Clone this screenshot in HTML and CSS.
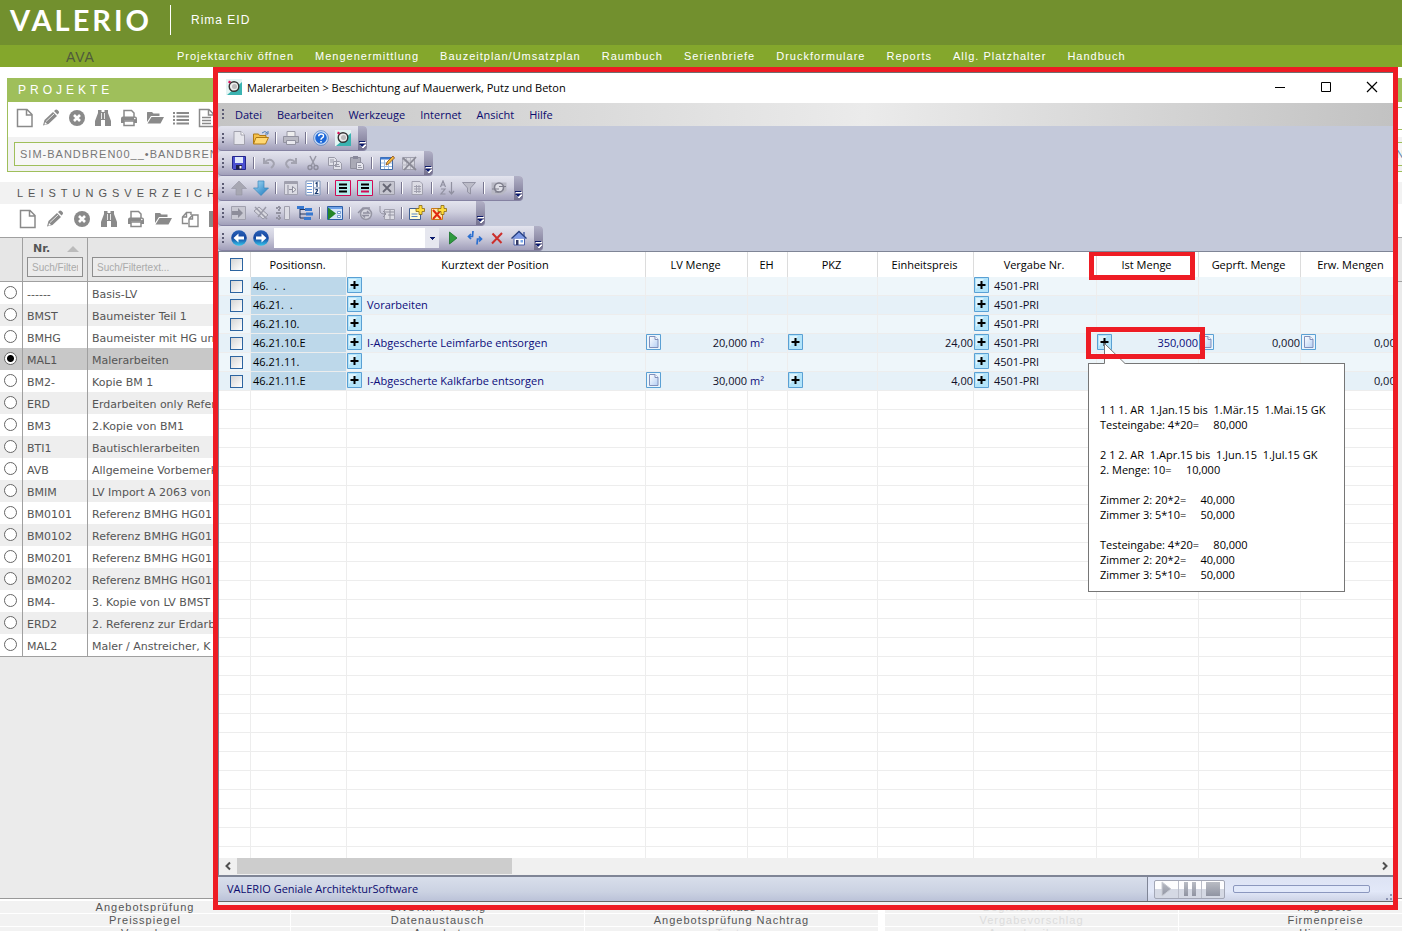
FILE: index.html
```html
<!DOCTYPE html>
<html lang="de">
  <head>
    <meta charset="utf-8">
    <title>VALERIO - AVA</title>
    <link rel="stylesheet" href="styles.css">
  </head>
  <body>
    <!-- icon sprite -->
    <svg class="sprite" width="0" height="0">
      <defs>
        <linearGradient id="gBlue" x1="0" y1="0" x2="0" y2="1"><stop offset="0" stop-color="#2a62b8"/><stop offset=".5" stop-color="#1546a0"/><stop offset="1" stop-color="#35c8ee"/></linearGradient>
        <linearGradient id="gDown" x1="0" y1="0" x2="1" y2="1"><stop offset="0" stop-color="#a8dcf6"/><stop offset="1" stop-color="#1877bd"/></linearGradient>
        <linearGradient id="gPage" x1="0" y1="0" x2="1" y2="1"><stop offset="0" stop-color="#ffffff"/><stop offset="1" stop-color="#b4cff4"/></linearGradient>
        <linearGradient id="gStop" x1="0" y1="0" x2="0" y2="1"><stop offset="0" stop-color="#b9bcc4"/><stop offset="1" stop-color="#9094a2"/></linearGradient>
      </defs>
      <!-- grey page icons -->
      <symbol id="w-page" viewBox="0 0 18 20"><path d="M1.500 1.500h9.500l5 5v12h-14.500zM10.500 1.500v5.500h5.500" fill="none" stroke="#8a8a8a" stroke-width="1.500"/></symbol>
      <symbol id="w-pen" viewBox="0 0 18 20"><path d="M1 17.500l1.500-5.500L11 4l4 4-8.500 8zM12 3l1.500-1.300q1-.6 2 .3l1.200 1.300q.8 1 0 1.900L15.500 6.500z" fill="#8a8a8a"/><path d="M4 13.500l8-7.500" stroke="#fff" stroke-width=".8"/><path d="M3 14l2 2-2.500.7z" fill="#fff"/></symbol>
      <symbol id="w-del" viewBox="0 0 18 20"><circle cx="9" cy="10" r="8" fill="#8a8a8a"/><path d="M6 7l6 6M12 7l-6 6" stroke="#fff" stroke-width="2.600"/></symbol>
      <symbol id="w-find" viewBox="0 0 18 20"><path d="M4 2h3.500v2h3V2H14v3l3 8v5h-6v-6H7v6H1v-5l3-8z" fill="#8a8a8a"/><path d="M7.500 5v6M10.500 5v6" stroke="#fff" stroke-width=".8"/></symbol>
      <symbol id="w-print" viewBox="0 0 18 20"><path d="M4 9V2.500h7.500L14 5v4M4 13h10v4.500H4z" fill="none" stroke="#8a8a8a" stroke-width="1.500"/><path d="M1 15v-4.500Q1 8.500 3 8.500h12q2 0 2 2V15h-3v-2.500H4V15z" fill="#8a8a8a"/><circle cx="14.800" cy="10.500" r=".8" fill="#fff"/></symbol>
      <symbol id="w-open" viewBox="0 0 18 20"><path d="M1 14V4.500Q1 4 1.500 4h4.500l1.500 1.500h6V8H5z" fill="#8a8a8a"/><path d="M5.500 9H18l-3.500 6.500H1.500z" fill="#8a8a8a"/></symbol>
      <symbol id="w-list" viewBox="0 0 18 20"><path d="M1 5h2M1 8.500h2M1 12h2M1 15.500h2M4.500 5H17M4.500 8.500H17M4.500 12H17M4.500 15.500H17" stroke="#8a8a8a" stroke-width="2.200"/></symbol>
      <symbol id="w-doc" viewBox="0 0 18 20"><path d="M1.500 1.500h9.500l5 5v12h-14.500zM10.500 1.500v5.500h5.500" fill="none" stroke="#8a8a8a" stroke-width="1.500"/><path d="M4 9.500h9M4 12.500h9M4 15.500h9" stroke="#8a8a8a" stroke-width="1.500"/></symbol>
      <symbol id="w-copy" viewBox="0 0 18 20"><path d="M7 14.500H1.500V8L5.500 3.500H10V6M5.500 3.500V8H1.500M8 17.500V10l3.500-4H17v11.500zM11.500 6v4H8" fill="none" stroke="#8a8a8a" stroke-width="1.400"/></symbol>
      <symbol id="w-save" viewBox="0 0 18 20"><path d="M1 2h16v16H1z" fill="#8a8a8a"/></symbol>

      <!-- application toolbar icons -->
      <symbol id="t-logo" viewBox="0 0 16 16"><path d="M0 0h16v16H0z" fill="#e4f4f3"/><path d="M16 3v13H1z" fill="#3bb3b1"/><circle cx="8" cy="7.500" r="4.800" fill="#eee" stroke="#333" stroke-width="1.400"/><circle cx="8.500" cy="7.500" r="2.500" fill="#bbb"/><path d="M2.500 2.500l2 1" stroke="#e0105a" stroke-width="2"/></symbol>
      <symbol id="t-new" viewBox="0 0 16 16"><path d="M3 1.500h7l3.500 3.500v9.500H3z" fill="#e6e6ec" stroke="#a2a2ae"/><path d="M10 1.500V5h3.500" fill="#fff" stroke="#a2a2ae"/></symbol>
      <symbol id="t-open" viewBox="0 0 16 16"><path d="M.5 14V4h5l1 1.500h6.500V8" fill="#f5c04a" stroke="#b07a14"/><path d="M3 7.500h12.500L12.500 14H.5z" fill="#ffd872" stroke="#b07a14"/><path d="M9 3q3-3 5.500 0M15 1v3h-3" fill="none" stroke="#4e7fb5"/></symbol>
      <symbol id="t-print" viewBox="0 0 16 16"><path d="M4 7V1.500h8V7" fill="#eee" stroke="#9a9aa6"/><path d="M.5 6.500h15v6H.5z" fill="#b9b9c3" stroke="#9292a0"/><path d="M3.500 10.500h9v4h-9z" fill="#e8e8ee" stroke="#9292a0"/></symbol>
      <symbol id="t-help" viewBox="0 0 16 16"><circle cx="8" cy="8" r="6.500" fill="#1e68d8" stroke="#c9dcf6" stroke-width="1.500"/><circle cx="8" cy="8" r="7.400" fill="none" stroke="#3b6fb9" stroke-width=".6"/><path d="M5.700 6.300q0-2.400 2.400-2.400t2.400 2q0 1.100-1.300 1.900T8 9.700M8 11v1.600" fill="none" stroke="#fff" stroke-width="1.500"/></symbol>
      <symbol id="t-save" viewBox="0 0 16 16"><path d="M1.500 1.500h13v13h-12l-1-1z" fill="#4a4fd0" stroke="#23268c"/><path d="M4 2h8v6H4z" fill="#dfe8fb"/><path d="M5 10h6v4.500H5z" fill="#20224c"/><path d="M8.500 11h2v2.500h-2z" fill="#fff"/></symbol>
      <symbol id="t-undo" viewBox="0 0 16 16"><path d="M3 3v5h5M3.500 7.500Q8 3 11.500 6t-1.500 7" fill="none" stroke="#a3a3b0" stroke-width="2"/></symbol>
      <symbol id="t-redo" viewBox="0 0 16 16"><path d="M13 3v5H8M12.500 7.500Q8 3 4.500 6T6 13" fill="none" stroke="#a3a3b0" stroke-width="2"/></symbol>
      <symbol id="t-cut" viewBox="0 0 16 16"><path d="M5 1l5 10M11 1L6 11" stroke="#9898a6" stroke-width="1.500"/><circle cx="5" cy="12.500" r="2" fill="none" stroke="#8d8d9c" stroke-width="1.400"/><circle cx="11" cy="12.500" r="2" fill="none" stroke="#8d8d9c" stroke-width="1.400"/></symbol>
      <symbol id="t-copy" viewBox="0 0 16 16"><path d="M1.500 2.500h6l2 2v6h-8zM6.500 6.500h6l2 2v6h-8z" fill="#e2e2ea" stroke="#9a9aa8"/><path d="M3 5h4M3 7h3M8 9.500h4M8 11.500h5" stroke="#9a9aa8"/></symbol>
      <symbol id="t-paste" viewBox="0 0 16 16"><path d="M1.500 2.500h10v11h-10z" fill="#aaaab6" stroke="#8e8e9c"/><path d="M4 1h5v3H4z" fill="#88889a"/><path d="M7.500 7.500h5l2 2v5h-7z" fill="#e6e6ee" stroke="#9090a0"/><path d="M9 10.500h3M9 12.500h4" stroke="#9a9aa8"/></symbol>
      <symbol id="t-edit" viewBox="0 0 16 16"><path d="M1.500 2.500h12v12h-12z" fill="#fff" stroke="#3f6aa8"/><path d="M1.500 3.500h12" stroke="#3f7ad0" stroke-width="2"/><path d="M2 8h11M2 11.500h11M5.500 5v9M9.500 5v9" stroke="#9cbbe2"/><path d="M7 10l1-3 6-6 1.500 2L9.500 9z" fill="#f0b840" stroke="#8c4a16" stroke-width=".8"/></symbol>
      <symbol id="t-editx" viewBox="0 0 16 16"><path d="M1.500 2.500h12v12h-12z" fill="#d8d8e0" stroke="#a0a0ae"/><path d="M1 6h12M1 10h12M5.500 3v11M9.500 3v11" stroke="#b8b8c4"/><path d="M2 3l13 12M15 2L3 15" stroke="#8a8a96" stroke-width="1.800"/></symbol>
      <symbol id="t-up" viewBox="0 0 16 16"><path d="M8 1l7.500 7.500H11V15H5V8.500H.5z" fill="#a7a7b2" stroke="#9494a2" stroke-width=".6"/></symbol>
      <symbol id="t-down" viewBox="0 0 16 16"><path d="M8 15.500L.5 8H5V1h6v7h4.500z" fill="url(#gDown)" stroke="#3a86bb" stroke-width=".7"/></symbol>
      <symbol id="t-insert" viewBox="0 0 16 16"><path d="M1.500 1.500h13v13h-13z" fill="#dcdce4" stroke="#a0a0ae"/><path d="M1.500 3h13" stroke="#a0a0ae" stroke-width="2"/><path d="M5 5v9M6 9.500h4M9.500 6.500l3.500 3-3.500 3z" fill="#eee" stroke="#8d8d9c"/></symbol>
      <symbol id="t-num" viewBox="0 0 16 16"><path d="M1 1h14v14H1z" fill="#fff" stroke="#7d93b8"/><path d="M2 3.500h5M2 6.500h5M2 9.500h5M2 12.500h5" stroke="#6f9bd8"/><path d="M8.500 1v14" stroke="#7d93b8"/><path d="M10.500 3.500l1.500-1V7M10.500 10q2-1.500 2 .5l-2 3h3" fill="none" stroke="#16386e" stroke-width="1.200"/><path d="M9 8h6" stroke="#7d93b8"/></symbol>
      <symbol id="t-rows1" viewBox="0 0 16 16"><path d="M.5 .5h15v15H.5z" fill="#b6ecec" stroke="#d20a55"/><path d="M4 4.500h8M4 11.500h8" stroke="#000" stroke-width="2"/><path d="M4 8h8" stroke="#000" stroke-width="2"/></symbol>
      <symbol id="t-rows2" viewBox="0 0 16 16"><path d="M.5 .5h15v15H.5z" fill="#b6ecec" stroke="#d20a55"/><path d="M4 4.500h8M4 8h8" stroke="#000" stroke-width="2"/><path d="M4 11.500h8" stroke="#d20a55" stroke-width="2"/></symbol>
      <symbol id="t-rowsx" viewBox="0 0 16 16"><path d="M.5 1.500h15v13H.5z" fill="#c6c6d0" stroke="#9a9aa8"/><path d="M4 4l8 8M12 4l-8 8" stroke="#666674" stroke-width="1.800"/></symbol>
      <symbol id="t-form" viewBox="0 0 16 16"><path d="M3 1.500h8l2.500 2.500v10.500H3z" fill="#dcdce4" stroke="#a0a0ae"/><path d="M5 6.500h7M5 9h7M5 11.500h7M7.500 5v8M10 5v8" stroke="#a0a0ae"/></symbol>
      <symbol id="t-sort" viewBox="0 0 16 16"><path d="M1.500 7L4 1l2.500 6M2.500 5h3M2 9h4l-4 5h4.500M12.500 2v11M10 11l2.500 3 2.500-3" fill="none" stroke="#9090a0" stroke-width="1.200"/></symbol>
      <symbol id="t-filter" viewBox="0 0 16 16"><path d="M1.500 2.500h13L9.500 8v6l-3-2V8z" fill="#bcbcc8" stroke="#9494a4"/></symbol>
      <symbol id="t-refresh" viewBox="0 0 16 16"><path d="M.5 2.500h15v8l-4 4h-11z" fill="#b8b8c4"/><circle cx="8" cy="7.500" r="4.500" fill="#dedee6" stroke="#7e7e8c" stroke-width="1.600"/><path d="M1 9h7M8 6.500h7M4 12h4" stroke="#7e7e8c"/></symbol>
      <symbol id="t-goto" viewBox="0 0 16 16"><path d="M.5 1.500h14v13H.5z" fill="#c8c8d2" stroke="#a0a0ae"/><path d="M1 6h6V3l5 5-5 5v-3H1z" fill="#8d8d9a"/></symbol>
      <symbol id="t-erase" viewBox="0 0 16 16"><path d="M1 6l5-4 9 8-5 4z" fill="#d8d8e0" stroke="#9898a6"/><path d="M2 2l12 12M13 2L5 12" stroke="#9a9aa8" stroke-width="1.500"/></symbol>
      <symbol id="t-cols" viewBox="0 0 16 16"><path d="M9.500 1.500h5v13h-5z" fill="#dcdce4" stroke="#a0a0ae"/><path d="M1 3h6M1 8h6M1 13h6M4 1v14" stroke="#9494a2" stroke-width="2" stroke-dasharray="2 1"/></symbol>
      <symbol id="t-tree" viewBox="0 0 16 16"><path d="M3 2v11h6M3 4.500h6M3 9h6" fill="none" stroke="#25365e"/><path d="M0 1h7v3H0zM8 3h7v3H8zM9 7.500h7v3H9zM7 12h7v3H7z" fill="#3778cf"/></symbol>
      <symbol id="t-run" viewBox="0 0 16 16"><path d="M.5 1.500h15v13H.5z" fill="#d5e5fb" stroke="#2d5ea8"/><path d="M1 3h14" stroke="#6fa2e8" stroke-width="2"/><path d="M1 2.500l8 6-8 6.500z" fill="#25862a"/><path d="M10.500 6.500h3v2h-3zM10.500 10.500h3v2h-3z" fill="#fff" stroke="#5b86c4" stroke-width=".8"/></symbol>
      <symbol id="t-cycle" viewBox="0 0 16 16"><circle cx="9" cy="9" r="5.500" fill="#d5d5de" stroke="#9696a4" stroke-width="1.500"/><path d="M1 8l5-5h7M6 8h6l-2-2M12 10.500H6l2 2" fill="none" stroke="#9090a0" stroke-width="1.400"/></symbol>
      <symbol id="t-into" viewBox="0 0 16 16"><path d="M5.500 4.500h10v10h-10z" fill="#dcdce4" stroke="#a0a0ae"/><path d="M1 1v5q0 3 5 3M4 6l3 3-3 3M6 7h9M9 10h6M11 5v9" fill="none" stroke="#9494a2"/></symbol>
      <symbol id="t-noteadd" viewBox="0 0 16 16"><path d="M.5 3.500h11v11H.5z" fill="#fffbd8" stroke="#3f5f94"/><path d="M2.500 9h6M2.500 11.500h6" stroke="#5887c7"/><path d="M10 .5h3v3h2.500v3H13v3h-3v-3H7v-3h3z" fill="#ffdc3c" stroke="#8a6a10" stroke-width=".8"/></symbol>
      <symbol id="t-notedel" viewBox="0 0 16 16"><path d="M.5 3.500h11v11H.5z" fill="#ffe8b0" stroke="#c87a18"/><path d="M2 5l8 9M10 5l-8 9" stroke="#e22a10" stroke-width="2"/><path d="M10 .5h3v3h2.500v3H13v3h-3v-3H7v-3h3z" fill="#ffdc3c" stroke="#8a6a10" stroke-width=".8"/></symbol>
      <symbol id="t-back" viewBox="0 0 16 16"><circle cx="8" cy="8" r="7.800" fill="url(#gBlue)"/><path d="M2.500 8l5-4.500V6.500H13v3H7.500v3z" fill="#fff"/></symbol>
      <symbol id="t-fwd" viewBox="0 0 16 16"><circle cx="8" cy="8" r="7.800" fill="url(#gBlue)"/><path d="M13.500 8l-5-4.500V6.500H3v3h5.500v3z" fill="#fff"/></symbol>
      <symbol id="t-play" viewBox="0 0 16 16"><path d="M4.500 2l7.500 6-7.500 6z" fill="#2f9a3e" stroke="#17702a" stroke-width=".8"/></symbol>
      <symbol id="t-swap" viewBox="0 0 16 16"><path d="M6 1L5.500 6.500H1.500M4 4L1.500 6.500 4 9M10 14.500L10.500 9h4M12 6.500L14.500 9 12 11.500" fill="none" stroke="#2a6fd0" stroke-width="1.700"/></symbol>
      <symbol id="t-stop" viewBox="0 0 16 16"><path d="M3.500 3.500l9 9.500M13 3L3 13.500" stroke="#cc2f2c" stroke-width="2"/></symbol>
      <symbol id="t-home" viewBox="0 0 16 16"><path d="M3 8h10.500v7H3z" fill="#fff" stroke="#4a5ea8"/><path d="M12 2h2v4h-2z" fill="#7080b8"/><path d="M.5 8.500L8 1.500l7.500 7" fill="#7e9ae6" stroke="#28407f" stroke-width="1.300"/><path d="M5 10h2.500v5H5z" fill="#333a66"/><path d="M9.500 10h2.500v2.500H9.500z" fill="#79a7e8"/></symbol>
      <symbol id="t-more" viewBox="0 0 9 24"><path d="M2 16.500h6M2 19h6l-3 3z" fill="#fff" stroke="#fff"/><path d="M1 15.500h6" stroke="#0b1a6c"/><path d="M1 18h6l-3 3z" fill="#0b1a6c"/></symbol>
      <!-- cell icons -->
      <symbol id="c-plus" viewBox="0 0 15 16"><path d="M.5 .5h14v15H.5z" fill="#b3e4fa" stroke="#5aa0d4"/><path d="M2 2h8l-8 10z" fill="#dff4fd"/><path d="M7.500 4v8M3.500 8h8" stroke="#000" stroke-width="2"/></symbol>
      <symbol id="c-page" viewBox="0 0 15 16"><path d="M.5 .5h14v15H.5z" fill="#eaf5fd" stroke="#5aa0d4"/><path d="M3.500 2.500h5.500l3 3v8h-8.500z" fill="url(#gPage)" stroke="#8190bb"/><path d="M9 2.500v3h3" fill="#fff" stroke="#8190bb"/></symbol>
    </svg>

    <header class="topbar">
      <div class="logo">VALERIO</div>
      <div class="user">Rima EID</div>
    </header>
    <nav class="mainnav">
      <div class="module">AVA</div>
      <a href="#">Projektarchiv öffnen</a>
      <a href="#">Mengenermittlung</a>
      <a href="#">Bauzeitplan/Umsatzplan</a>
      <a href="#">Raumbuch</a>
      <a href="#">Serienbriefe</a>
      <a href="#">Druckformulare</a>
      <a href="#">Reports</a>
      <a href="#">Allg. Platzhalter</a>
      <a href="#">Handbuch</a>
    </nav>

    <main class="content">
      <section class="panel">
        <h2 class="panel-title">PROJEKTE</h2>
        <div class="icon-row">
          <button type="button" aria-label="Neu"><svg><use href="#w-page"/></svg></button>
          <button type="button" aria-label="Bearbeiten"><svg><use href="#w-pen"/></svg></button>
          <button type="button" aria-label="Löschen"><svg><use href="#w-del"/></svg></button>
          <button type="button" aria-label="Suchen"><svg><use href="#w-find"/></svg></button>
          <button type="button" aria-label="Drucken"><svg><use href="#w-print"/></svg></button>
          <button type="button" aria-label="Öffnen"><svg><use href="#w-open"/></svg></button>
          <button type="button" aria-label="Liste"><svg><use href="#w-list"/></svg></button>
          <button type="button" aria-label="Dokument"><svg><use href="#w-doc"/></svg></button>
          <span class="row-field"></span>
        </div>
        <div class="project-row">
          <input type="text" class="project-input" aria-label="Projekt" value="SIM-BANDBREN00__•BANDBREN00">
          <input type="text" class="project-input project-next" aria-label="Nummer" value="N">
        </div>
      </section>

      <h2 class="list-title">LEISTUNGSVERZEICHNIS</h2>
      <div class="icon-row icon-row-wide">
        <button type="button" aria-label="Neu"><svg><use href="#w-page"/></svg></button>
        <button type="button" aria-label="Bearbeiten"><svg><use href="#w-pen"/></svg></button>
        <button type="button" aria-label="Löschen"><svg><use href="#w-del"/></svg></button>
        <button type="button" aria-label="Suchen"><svg><use href="#w-find"/></svg></button>
        <button type="button" aria-label="Drucken"><svg><use href="#w-print"/></svg></button>
        <button type="button" aria-label="Öffnen"><svg><use href="#w-open"/></svg></button>
        <button type="button" aria-label="Kopieren"><svg><use href="#w-copy"/></svg></button>
        <button type="button" aria-label="Speichern"><svg><use href="#w-save"/></svg></button>
      </div>
      <table class="lv-list">
        <thead>
          <tr>
            <th class="c-radio"></th>
            <th class="c-nr"><span class="nr-label">Nr.<i class="sort-up"></i></span><input type="text" aria-label="Nr. filtern" placeholder="Such/Filtertext..."></th>
            <th class="c-name"><input type="text" aria-label="Name filtern" placeholder="Such/Filtertext..."></th>
            <th class="c-rest"></th>
          </tr>
        </thead>
        <tbody>
          <tr><td><input type="radio" name="lv" aria-label="Basis-LV"></td><td>------</td><td>Basis-LV</td></tr>
          <tr><td><input type="radio" name="lv" aria-label="BMST"></td><td>BMST</td><td>Baumeister Teil 1</td></tr>
          <tr><td><input type="radio" name="lv" aria-label="BMHG"></td><td>BMHG</td><td>Baumeister mit HG und</td></tr>
          <tr class="selected"><td><input type="radio" name="lv" aria-label="MAL1" checked></td><td>MAL1</td><td>Malerarbeiten</td></tr>
          <tr><td><input type="radio" name="lv" aria-label="BM2-"></td><td>BM2-</td><td>Kopie BM 1</td></tr>
          <tr><td><input type="radio" name="lv" aria-label="ERD"></td><td>ERD</td><td>Erdarbeiten only Referenz</td></tr>
          <tr><td><input type="radio" name="lv" aria-label="BM3"></td><td>BM3</td><td>2.Kopie von BM1</td></tr>
          <tr><td><input type="radio" name="lv" aria-label="BTI1"></td><td>BTI1</td><td>Bautischlerarbeiten</td></tr>
          <tr><td><input type="radio" name="lv" aria-label="AVB"></td><td>AVB</td><td>Allgemeine Vorbemerkungen</td></tr>
          <tr><td><input type="radio" name="lv" aria-label="BMIM"></td><td>BMIM</td><td>LV Import A 2063 von</td></tr>
          <tr><td><input type="radio" name="lv" aria-label="BM0101"></td><td>BM0101</td><td>Referenz BMHG HG01</td></tr>
          <tr><td><input type="radio" name="lv" aria-label="BM0102"></td><td>BM0102</td><td>Referenz BMHG HG01</td></tr>
          <tr><td><input type="radio" name="lv" aria-label="BM0201"></td><td>BM0201</td><td>Referenz BMHG HG01</td></tr>
          <tr><td><input type="radio" name="lv" aria-label="BM0202"></td><td>BM0202</td><td>Referenz BMHG HG01</td></tr>
          <tr><td><input type="radio" name="lv" aria-label="BM4-"></td><td>BM4-</td><td>3. Kopie von LV BMST</td></tr>
          <tr><td><input type="radio" name="lv" aria-label="ERD2"></td><td>ERD2</td><td>2. Referenz zur Erdarbeit</td></tr>
          <tr><td><input type="radio" name="lv" aria-label="MAL2"></td><td>MAL2</td><td>Maler / Anstreicher, K</td></tr>
        </tbody>
      </table>
    </main>

    <footer class="links">
      <div class="link-col"><a href="#">Angebotsprüfung</a><a href="#">Preisspiegel</a><a href="#">Vergabe</a></div>
      <div class="link-col"><a href="#">ÖNORM-Prüfung</a><a href="#">Datenaustausch</a><a href="#">Angebot</a></div>
      <div class="link-col"><a href="#">Aufmass</a><a href="#">Angebotsprüfung Nachtrag</a><a href="#" class="faint">Texte</a></div>
      <div class="link-col faint split"><a href="#">Begleitschreiben</a><a href="#">Vergabevorschlag</a><a href="#">Ausschreibung</a></div>
      <div class="link-col"><a href="#">Angebote</a><a href="#">Firmenpreise</a><a href="#">Hinweise</a></div>
    </footer>

    <!-- Malerarbeiten window -->
    <div class="window">
      <div class="titlebar">
        <svg class="app-icon"><use href="#t-logo"/></svg>
        <span>Malerarbeiten &gt; Beschichtung auf Mauerwerk, Putz und Beton</span>
        <div class="win-buttons">
          <button type="button" aria-label="Minimieren"><svg viewBox="0 0 12 12"><path d="M1 6.500h10" stroke="#000"/></svg></button>
          <button type="button" aria-label="Maximieren"><svg viewBox="0 0 12 12"><path d="M1.500 1.500h9v9h-9z" fill="none" stroke="#000"/></svg></button>
          <button type="button" aria-label="Schließen"><svg viewBox="0 0 12 12"><path d="M1 1l10 10M11 1L1 11" stroke="#000" stroke-width="1.200"/></svg></button>
        </div>
      </div>
      <div class="menubar">
        <i class="grip"></i>
        <button type="button">Datei</button>
        <button type="button">Bearbeiten</button>
        <button type="button">Werkzeuge</button>
        <button type="button">Internet</button>
        <button type="button">Ansicht</button>
        <button type="button">Hilfe</button>
      </div>
      <div class="toolbars">
        <div class="toolbar">
          <i class="grip"></i>
          <button type="button" aria-label="Neu"><svg><use href="#t-new"/></svg></button>
          <button type="button" aria-label="Öffnen"><svg><use href="#t-open"/></svg></button>
          <i class="sep"></i>
          <button type="button" aria-label="Drucken"><svg><use href="#t-print"/></svg></button>
          <i class="sep"></i>
          <button type="button" aria-label="Hilfe"><svg><use href="#t-help"/></svg></button>
          <button type="button" aria-label="Info"><svg><use href="#t-logo"/></svg></button>
          <svg class="more"><use href="#t-more"/></svg>
        </div>
        <div class="toolbar">
          <i class="grip"></i>
          <button type="button" aria-label="Speichern"><svg><use href="#t-save"/></svg></button>
          <i class="sep"></i>
          <button type="button" aria-label="Rückgängig"><svg><use href="#t-undo"/></svg></button>
          <button type="button" aria-label="Wiederholen"><svg><use href="#t-redo"/></svg></button>
          <button type="button" aria-label="Ausschneiden"><svg><use href="#t-cut"/></svg></button>
          <button type="button" aria-label="Kopieren"><svg><use href="#t-copy"/></svg></button>
          <button type="button" aria-label="Einfügen"><svg><use href="#t-paste"/></svg></button>
          <i class="sep"></i>
          <button type="button" aria-label="Bearbeiten"><svg><use href="#t-edit"/></svg></button>
          <button type="button" aria-label="Abbrechen"><svg><use href="#t-editx"/></svg></button>
          <svg class="more"><use href="#t-more"/></svg>
        </div>
        <div class="toolbar">
          <i class="grip"></i>
          <button type="button" aria-label="Nach oben"><svg><use href="#t-up"/></svg></button>
          <button type="button" aria-label="Nach unten"><svg><use href="#t-down"/></svg></button>
          <i class="sep"></i>
          <button type="button" aria-label="Einrücken"><svg><use href="#t-insert"/></svg></button>
          <button type="button" aria-label="Nummerieren"><svg><use href="#t-num"/></svg></button>
          <i class="sep"></i>
          <button type="button" aria-label="Zeile einfügen"><svg><use href="#t-rows1"/></svg></button>
          <button type="button" aria-label="Zeile anhängen"><svg><use href="#t-rows2"/></svg></button>
          <button type="button" aria-label="Zeile löschen"><svg><use href="#t-rowsx"/></svg></button>
          <i class="sep"></i>
          <button type="button" aria-label="Formular"><svg><use href="#t-form"/></svg></button>
          <i class="sep"></i>
          <button type="button" aria-label="Sortieren"><svg><use href="#t-sort"/></svg></button>
          <button type="button" aria-label="Filtern"><svg><use href="#t-filter"/></svg></button>
          <i class="sep"></i>
          <button type="button" aria-label="Aktualisieren"><svg><use href="#t-refresh"/></svg></button>
          <svg class="more"><use href="#t-more"/></svg>
        </div>
        <div class="toolbar toolbar-long">
          <i class="grip"></i>
          <button type="button" aria-label="Gehe zu"><svg><use href="#t-goto"/></svg></button>
          <button type="button" aria-label="Leeren"><svg><use href="#t-erase"/></svg></button>
          <button type="button" aria-label="Spalten"><svg><use href="#t-cols"/></svg></button>
          <button type="button" aria-label="Struktur"><svg><use href="#t-tree"/></svg></button>
          <i class="sep"></i>
          <button type="button" aria-label="Ausführen"><svg><use href="#t-run"/></svg></button>
          <i class="sep"></i>
          <button type="button" aria-label="Abgleichen"><svg><use href="#t-cycle"/></svg></button>
          <button type="button" aria-label="Übernehmen"><svg><use href="#t-into"/></svg></button>
          <i class="sep"></i>
          <button type="button" aria-label="Notiz anlegen"><svg><use href="#t-noteadd"/></svg></button>
          <button type="button" aria-label="Notiz löschen"><svg><use href="#t-notedel"/></svg></button>
          <svg class="more"><use href="#t-more"/></svg>
        </div>
        <div class="toolbar">
          <i class="grip"></i>
          <button type="button" aria-label="Zurück"><svg><use href="#t-back"/></svg></button>
          <button type="button" aria-label="Vor"><svg><use href="#t-fwd"/></svg></button>
          <select class="address" aria-label="Adresse"><option></option></select>
          <button type="button" aria-label="Start"><svg><use href="#t-play"/></svg></button>
          <button type="button" aria-label="Neu laden"><svg><use href="#t-swap"/></svg></button>
          <button type="button" aria-label="Stopp"><svg><use href="#t-stop"/></svg></button>
          <button type="button" aria-label="Startseite"><svg><use href="#t-home"/></svg></button>
          <svg class="more"><use href="#t-more"/></svg>
        </div>
      </div>

      <div class="grid-wrap">
        <table class="grid">
          <colgroup>
            <col class="w-check"><col class="w-pos"><col class="w-text"><col class="w-menge"><col class="w-eh"><col class="w-pkz"><col class="w-pos"><col class="w-vergabe"><col class="w-menge"><col class="w-menge"><col class="w-menge">
          </colgroup>
          <thead>
            <tr>
              <th><input type="checkbox" aria-label="Alle auswählen"></th>
              <th>Positionsn.</th>
              <th>Kurztext der Position</th>
              <th>LV Menge</th>
              <th>EH</th>
              <th>PKZ</th>
              <th>Einheitspreis</th>
              <th>Vergabe Nr.</th>
              <th class="marked">Ist Menge<i class="mark mark-head"></i></th>
              <th>Geprft. Menge</th>
              <th>Erw. Mengen</th>
            </tr>
          </thead>
          <tbody>
            <tr>
              <td><input type="checkbox" aria-label="46."></td>
              <td class="pos">46.&nbsp; .&nbsp; .</td>
              <td><div class="cell"><svg><use href="#c-plus"/></svg></div></td>
              <td></td><td></td><td></td><td></td>
              <td><div class="cell dark"><svg><use href="#c-plus"/></svg>4501-PRI</div></td>
              <td></td><td></td><td></td>
            </tr>
            <tr>
              <td><input type="checkbox" aria-label="46.21."></td>
              <td class="pos">46.21.&nbsp; .</td>
              <td><div class="cell"><svg><use href="#c-plus"/></svg>Vorarbeiten</div></td>
              <td></td><td></td><td></td><td></td>
              <td><div class="cell dark"><svg><use href="#c-plus"/></svg>4501-PRI</div></td>
              <td></td><td></td><td></td>
            </tr>
            <tr>
              <td><input type="checkbox" aria-label="46.21.10."></td>
              <td class="pos">46.21.10.</td>
              <td><div class="cell"><svg><use href="#c-plus"/></svg></div></td>
              <td></td><td></td><td></td><td></td>
              <td><div class="cell dark"><svg><use href="#c-plus"/></svg>4501-PRI</div></td>
              <td></td><td></td><td></td>
            </tr>
            <tr>
              <td><input type="checkbox" aria-label="46.21.10.E"></td>
              <td class="pos">46.21.10.E</td>
              <td><div class="cell"><svg><use href="#c-plus"/></svg>I-Abgescherte Leimfarbe entsorgen</div></td>
              <td><div class="cell num"><svg><use href="#c-page"/></svg>20,000</div></td>
              <td class="unit">m²</td>
              <td><div class="cell"><svg><use href="#c-plus"/></svg></div></td>
              <td><div class="cell num">24,00</div></td>
              <td><div class="cell dark"><svg><use href="#c-plus"/></svg>4501-PRI</div></td>
              <td class="marked">
                <div class="cell num blue"><svg><use href="#c-plus"/></svg>350,000</div>
                <i class="mark mark-cell"></i>
                <div class="hint">
                  <svg class="hint-tip" viewBox="0 0 22 22"><path d="M.5 21.500V.5l21 20.500v1z" fill="#fff"/><path d="M.5 20.500V.5l20.500 20" fill="none" stroke="#767676"/></svg>
<pre>
1 1 1. AR  1.Jan.15 bis  1.Mär.15  1.Mai.15 GK
Testeingabe: 4*20=     80,000

2 1 2. AR  1.Apr.15 bis  1.Jun.15  1.Jul.15 GK
2. Menge: 10=     10,000

Zimmer 2: 20*2=     40,000
Zimmer 3: 5*10=     50,000

Testeingabe: 4*20=     80,000
Zimmer 2: 20*2=     40,000
Zimmer 3: 5*10=     50,000</pre>
                </div>
              </td>
              <td><div class="cell num"><svg><use href="#c-page"/></svg>0,000</div></td>
              <td><div class="cell num"><svg><use href="#c-page"/></svg>0,000</div></td>
            </tr>
            <tr>
              <td><input type="checkbox" aria-label="46.21.11."></td>
              <td class="pos">46.21.11.</td>
              <td><div class="cell"><svg><use href="#c-plus"/></svg></div></td>
              <td></td><td></td><td></td><td></td>
              <td><div class="cell dark"><svg><use href="#c-plus"/></svg>4501-PRI</div></td>
              <td></td><td></td><td></td>
            </tr>
            <tr>
              <td><input type="checkbox" aria-label="46.21.11.E"></td>
              <td class="pos">46.21.11.E</td>
              <td><div class="cell"><svg><use href="#c-plus"/></svg>I-Abgescherte Kalkfarbe entsorgen</div></td>
              <td><div class="cell num"><svg><use href="#c-page"/></svg>30,000</div></td>
              <td class="unit">m²</td>
              <td><div class="cell"><svg><use href="#c-plus"/></svg></div></td>
              <td><div class="cell num">4,00</div></td>
              <td><div class="cell dark"><svg><use href="#c-plus"/></svg>4501-PRI</div></td>
              <td></td><td></td>
              <td><div class="cell num">0,000</div></td>
            </tr>
            <tr class="empty"><td></td><td></td><td></td><td></td><td></td><td></td><td></td><td></td><td></td><td></td><td></td></tr>
          </tbody>
        </table>
      </div>

      <div class="hscroll">
        <svg viewBox="0 0 17 16"><path d="M11 4.500L7.500 8l3.500 3.500" fill="none" stroke="#505050" stroke-width="2"/></svg>
        <div class="thumb"></div>
        <svg viewBox="0 0 17 16"><path d="M7 4.500L10.500 8 7 11.500" fill="none" stroke="#505050" stroke-width="2"/></svg>
      </div>
      <div class="statusbar">
        <span>VALERIO Geniale ArchitekturSoftware</span>
        <div class="player">
          <div class="player-buttons">
            <button type="button" aria-label="Start"><svg viewBox="0 0 16 16"><path d="M4 1l9 7-9 7z" fill="url(#gStop)" stroke="#c9ccd4"/></svg></button>
            <button type="button" aria-label="Pause"><svg viewBox="0 0 16 16"><path d="M2 1h4v14H2zM10 1h4v14h-4z" fill="url(#gStop)"/></svg></button>
            <button type="button" aria-label="Stopp"><svg viewBox="0 0 16 16"><path d="M1 1h14v14H1z" fill="url(#gStop)"/></svg></button>
          </div>
          <div class="track"></div>
          <svg class="resize" viewBox="0 0 8 8"><path d="M5 1h2v2H5zM1 5h2v2H1zM5 5h2v2H5z" fill="#8b93b3"/></svg>
        </div>
      </div>
    </div>
  </body>
</html>
```
FILE: styles.css
```css
* {
  box-sizing: border-box;
}
body {
  margin: 0;
  height: 100vh;
  display: flex;
  flex-direction: column;
  position: relative;
  overflow: hidden;
  background: #fff;
  color: #555;
  font-family: "Liberation Sans", Arial, sans-serif;
  font-size: 11px;
}
button {
  background: none;
  border: none;
  padding: 0;
  margin: 0;
  font: inherit;
  color: inherit;
}
a {
  color: inherit;
  text-decoration: none;
}
.sprite {
  position: absolute;
}

/* top */
.topbar {
  height: 45px;
  flex: none;
  display: flex;
  align-items: flex-start;
  background: #72902e;
  color: #fff;
}
.logo {
  width: 171px;
  height: 30px;
  margin-top: 5px;
  padding-left: 10px;
  border-right: 1px solid #fff;
  font-family: Lato, sans-serif;
  font-weight: bold;
  font-size: 29px;
  line-height: 30px;
  letter-spacing: 3px;
}
.user {
  padding-left: 20px;
  font-size: 12px;
  line-height: 40px;
  letter-spacing: 1px;
}
.mainnav {
  height: 22px;
  flex: none;
  display: flex;
  gap: 21px;
  background: #84a72c;
  color: #fff;
  line-height: 23px;
  letter-spacing: 1px;
  white-space: nowrap;
}
.module {
  width: 156px;
  padding-left: 66px;
  color: #4f5a3c;
  font-size: 14px;
  line-height: 25px;
}

/* left side */
.content {
  flex: 1;
  min-height: 0;
  display: flex;
  flex-direction: column;
  background: #ebebeb;
  border-bottom: 1px solid #999;
}
.panel {
  flex: none;
  padding-left: 7px;
  border-top: 11px solid #fff;
  border-bottom: 10px solid #fff;
  background: #fff;
}
.panel-title {
  margin: 0;
  height: 24px;
  padding-left: 11px;
  background: #9fbf5b;
  color: #fff;
  font-size: 12px;
  font-weight: normal;
  line-height: 24px;
  letter-spacing: 4px;
}
.icon-row {
  height: 35px;
  display: flex;
  align-items: center;
  padding: 0 0 3px 4px;
  border-left: 1px solid #9fbf5b;
  background: #fff;
}
.icon-row button {
  width: 26px;
  height: 20px;
  display: flex;
  justify-content: center;
}
.icon-row svg {
  width: 18px;
  height: 20px;
}
.icon-row-wide {
  flex: none;
  height: 33px;
  padding-left: 14px;
  border-left: none;
}
.icon-row-wide button {
  width: 27px;
}
.row-field {
  width: 10px;
  height: 23px;
  margin-left: auto;
  border: 1px solid #9fbf5b;
  border-width: 1px 0;
}
.project-row {
  height: 35px;
  display: flex;
  align-items: center;
  padding: 0 0 0 6px;
  background: #f2f2f2;
  border-left: 1px solid #9fbf5b;
  border-bottom: 1px solid #9fbf5b;
}
.project-input {
  flex: 1;
  height: 24px;
  padding: 0 5px;
  background: #f7f7f7;
  border: 1px solid #9fbf5b;
  border-right: none;
  border-radius: 0;
  color: #777;
  font: 11px "Liberation Sans", Arial, sans-serif;
  letter-spacing: 1px;
}
.project-next {
  flex: none;
  width: 6px;
  padding: 0;
  border-left: none;
  color: #5b86b0;
}
.list-title {
  flex: none;
  margin: 0;
  height: 22px;
  padding-left: 17px;
  background: #f2f2f2;
  color: #555;
  font-size: 11px;
  font-weight: normal;
  line-height: 22px;
  letter-spacing: 5px;
}
.lv-list {
  width: 100%;
  table-layout: fixed;
  border-spacing: 0;
  font-family: "DejaVu Sans", Verdana, sans-serif;
  font-size: 11px;
}
.lv-list th {
  height: 45px;
  padding: 0 4px 4px;
  vertical-align: bottom;
  text-align: left;
  background: #e6e6e6;
  border-top: 1px solid #a0a0a0;
  border-bottom: 1px solid #a0a0a0;
}
.c-radio {
  width: 23px;
}
.c-nr {
  width: 65px;
}
.c-rest {
  width: 12px;
}
.lv-list td {
  height: 22px;
  padding: 3px 0 0 4px;
  overflow: hidden;
  line-height: 19px;
  white-space: nowrap;
  background: #fff;
}
.lv-list th:nth-child(-n+2),
.lv-list td:nth-child(-n+2) {
  border-right: 1px solid #a0a0a0;
}
.lv-list tbody tr:nth-child(even) td {
  background: #eee;
}
.lv-list tbody tr.selected td {
  background: #c8c8c8;
}
.lv-list tbody tr:last-child td {
  height: 23px;
  border-bottom: 1px solid #a0a0a0;
}
.lv-list td:first-child {
  padding-top: 0;
  padding-bottom: 1px;
}
.nr-label {
  display: flex;
  justify-content: space-between;
  align-items: center;
  padding: 0 4px 0 6px;
  line-height: 16px;
}
.sort-up {
  border: 6px solid transparent;
  border-top: none;
  border-bottom-color: #bbb;
}
.lv-list input[type="text"] {
  display: block;
  width: 100%;
  height: 20px;
  padding: 0 4px;
  background: #ececec;
  border: 1px solid #8e8e8e;
  font: 10px "Liberation Sans", Arial, sans-serif;
}
.lv-list .c-name input {
  width: 160px;
}
.lv-list input::placeholder {
  color: #aaa;
}
.lv-list input[type="radio"] {
  appearance: none;
  display: block;
  width: 13px;
  height: 13px;
  margin: 0;
  border: 1px solid #666;
  border-radius: 50%;
  background: #fff;
}
.lv-list input[type="radio"]:checked {
  background: radial-gradient(circle, #000 3px, #fff 4px);
}

/* footer links */
.links {
  flex: none;
  height: 32px;
  display: flex;
  padding-top: 2px;
  overflow: hidden;
  background: #fff;
  color: #555;
  letter-spacing: 1px;
}
.link-col {
  flex: 0 0 294px;
  display: flex;
  flex-direction: column;
  gap: 1px;
  border-left: 1px solid #fff;
  text-align: center;
}
.link-col:first-child {
  flex-basis: 290px;
  border-left: none;
}
.link-col a {
  height: 12px;
  line-height: 12px;
  background: #f2f2f2;
}
.split {
  margin-left: 6px;
}
.faint {
  color: #dcdcdc;
}

/* window */
.window {
  position: absolute;
  top: 67px;
  left: 213px;
  right: 4px;
  bottom: 21px;
  display: flex;
  flex-direction: column;
  border: 5px solid #ee1c24;
  background: #fff;
  color: #000;
  font-family: "Open Sans", "Segoe UI", sans-serif;
  font-size: 11px;
}
.titlebar {
  flex: none;
  height: 31px;
  display: flex;
  align-items: center;
  padding: 0 0 2px 8px;
  border-top: 1px solid #707070;
}
.app-icon {
  width: 16px;
  height: 16px;
  margin-right: 5px;
}
.win-buttons {
  display: flex;
  margin-left: auto;
}
.win-buttons button {
  width: 46px;
  height: 28px;
  display: flex;
  align-items: center;
  justify-content: center;
}
.win-buttons svg {
  width: 12px;
  height: 12px;
}
.win-buttons button:last-child {
  margin-right: -2px;
}
.menubar {
  flex: none;
  height: 23px;
  display: flex;
  align-items: center;
  padding-bottom: 1px;
  background: linear-gradient(to right, #c4c4c4, #ebebeb 55%, #c2c2c2);
  color: #0b0b6e;
}
.menubar button {
  margin: 0 8px 0 7px;
}
.grip {
  flex: none;
  width: 10px;
  height: 11px;
  background: repeating-linear-gradient(#5c5c74 0 2px, transparent 2px 4px) 4px 0 / 2px 11px no-repeat;
}
.toolbars {
  flex: none;
  display: flex;
  flex-direction: column;
  align-items: flex-start;
  background: #c4c9da;
  border-bottom: 1px solid #7f8596;
}
.toolbar {
  height: 25px;
  display: flex;
  align-items: center;
  border-bottom: 1px solid #8582a2;
  border-radius: 4px;
  background: linear-gradient(#e3e4ee, #cfcfde 45%, #a19fba);
}
.toolbar button {
  width: 22px;
  height: 20px;
  display: flex;
  align-items: center;
  justify-content: center;
}
.toolbar button svg {
  width: 16px;
  height: 16px;
}
.sep {
  width: 8px;
  height: 12px;
  background: linear-gradient(to right, #77758f 50%, #fff 50%) 3px 0 / 2px 12px no-repeat;
}
.more {
  width: 9px;
  height: 24px;
  margin-left: 4px;
  border-radius: 0 4px 4px 0;
  background: linear-gradient(#b1b0c6, #74718f);
}
.toolbar-long .more {
  margin-left: 26px;
}
.address {
  appearance: none;
  width: 165px;
  height: 20px;
  margin: 0 3px 0 2px;
  border: none;
  border-radius: 0;
  background:
    linear-gradient(#0b1a6c, #0b1a6c) 156px 9px / 5px 1px no-repeat,
    linear-gradient(#0b1a6c, #0b1a6c) 157px 10px / 3px 1px no-repeat,
    linear-gradient(#0b1a6c, #0b1a6c) 158px 11px / 1px 1px no-repeat,
    linear-gradient(to left, #e6e7ef 14px, #fff 14px);
}

/* positions grid */
.grid-wrap {
  flex: 1;
  min-height: 0;
  overflow: hidden;
  border-left: 1px solid #7f8596;
}
.grid {
  width: 1184px;
  height: 100%;
  table-layout: fixed;
  border-spacing: 0;
}
.w-check { width: 32px; }
.w-pos { width: 96px; }
.w-text { width: 299px; }
.w-menge { width: 102px; }
.w-eh { width: 40px; }
.w-pkz { width: 90px; }
.w-vergabe { width: 123px; }
.grid th {
  height: 25px;
  padding: 0 2px 0 0;
  border-right: 1px solid #dcdcdc;
  font-weight: normal;
}
.grid td {
  height: 19px;
  padding: 0;
  border-right: 1px solid #ededed;
  border-bottom: 1px solid #ededed;
  background: #eef6fa;
  line-height: 18px;
  white-space: nowrap;
}
.grid tr:nth-child(even) td {
  background: #e6f1f8;
}
.grid td.pos,
.grid tr:nth-child(even) td.pos {
  padding-left: 2px;
  background: #bdd8ea;
}
.grid .empty td {
  height: auto;
  border-bottom: none;
  background: repeating-linear-gradient(#fff 0 18px, #ededed 18px 19px);
}
.grid input {
  appearance: none;
  display: block;
  width: 13px;
  height: 13px;
  margin: 0 0 0 11px;
  border: 1px solid #2c64a0;
  background: linear-gradient(135deg, #d5d5d5, #fff);
}
.cell {
  height: 18px;
  display: flex;
  align-items: center;
  gap: 5px;
  color: #0b0b7a;
}
.cell svg {
  flex: none;
  align-self: flex-start;
  width: 15px;
  height: 16px;
}
.cell.dark,
.cell.num {
  color: #101028;
}
.cell.num {
  justify-content: flex-end;
}
.cell.num svg {
  margin-right: auto;
}
.cell.num.blue,
.grid .unit {
  color: #0b0b7a;
}
.grid .unit {
  padding-left: 2px;
}
.marked {
  position: relative;
}
.mark {
  position: absolute;
  z-index: 3;
  border: 5px solid #ee1c24;
}
.mark-head {
  top: -1px;
  left: -8px;
  width: 106px;
  height: 29px;
}
.mark-cell {
  top: -7px;
  left: -11px;
  width: 119px;
  height: 32px;
}
.hint {
  position: absolute;
  z-index: 2;
  top: 29px;
  left: -9px;
  width: 257px;
  height: 229px;
  padding: 38px 11px 0;
  border: 1px solid #767676;
  background: #fff;
  color: #000;
}
.hint-tip {
  position: absolute;
  top: -21px;
  left: 15px;
  width: 22px;
  height: 22px;
}
.hint pre {
  margin: 0;
  font: inherit;
  line-height: 15px;
}

/* bottom of the window */
.hscroll {
  flex: none;
  height: 17px;
  display: flex;
  padding-bottom: 1px;
  background: #f0f0f0;
  border-left: 1px solid #7f8596;
}
.hscroll svg {
  width: 17px;
  height: 16px;
}
.hscroll .thumb {
  width: 275px;
  margin: 0 auto 0 1px;
  background: #cdcdcd;
}
.statusbar {
  flex: none;
  height: 30px;
  display: flex;
  border-top: 2px solid #7f8596;
  border-bottom: 3px solid #f2f2f2;
  background: linear-gradient(#d8deeb, #cbd2e2 60%, #b9c0d7);
  box-shadow: inset 0 -1px #696969;
  color: #0b0b6e;
}
.statusbar span {
  padding-left: 9px;
  line-height: 23px;
}
.player {
  width: 246px;
  margin: 0 0 1px auto;
  display: flex;
  align-items: center;
  border-left: 1px solid #7f8596;
  background: linear-gradient(#dde3f4, #e2e8f8 60%, #cdd3e6);
}
.player-buttons {
  display: flex;
  margin: 0 8px 0 6px;
  border: 1px solid #a3a7b6;
  border-radius: 2px;
  background: linear-gradient(#fdfdfe 50%, #d5d9e4 50%);
}
.player-buttons button {
  width: 23px;
  height: 17px;
  padding: 0 3px;
}
.player-buttons button + button {
  border-left: 1px solid #b9bcc8;
}
.player-buttons svg {
  display: block;
  width: 16px;
  height: 16px;
}
.track {
  flex: 1;
  height: 8px;
  border: 1px solid #8b97be;
  border-radius: 2px;
  background: #e2e9fa;
}
.resize {
  width: 8px;
  height: 8px;
  margin: 0 0 0 15px;
  align-self: flex-end;
}
```
